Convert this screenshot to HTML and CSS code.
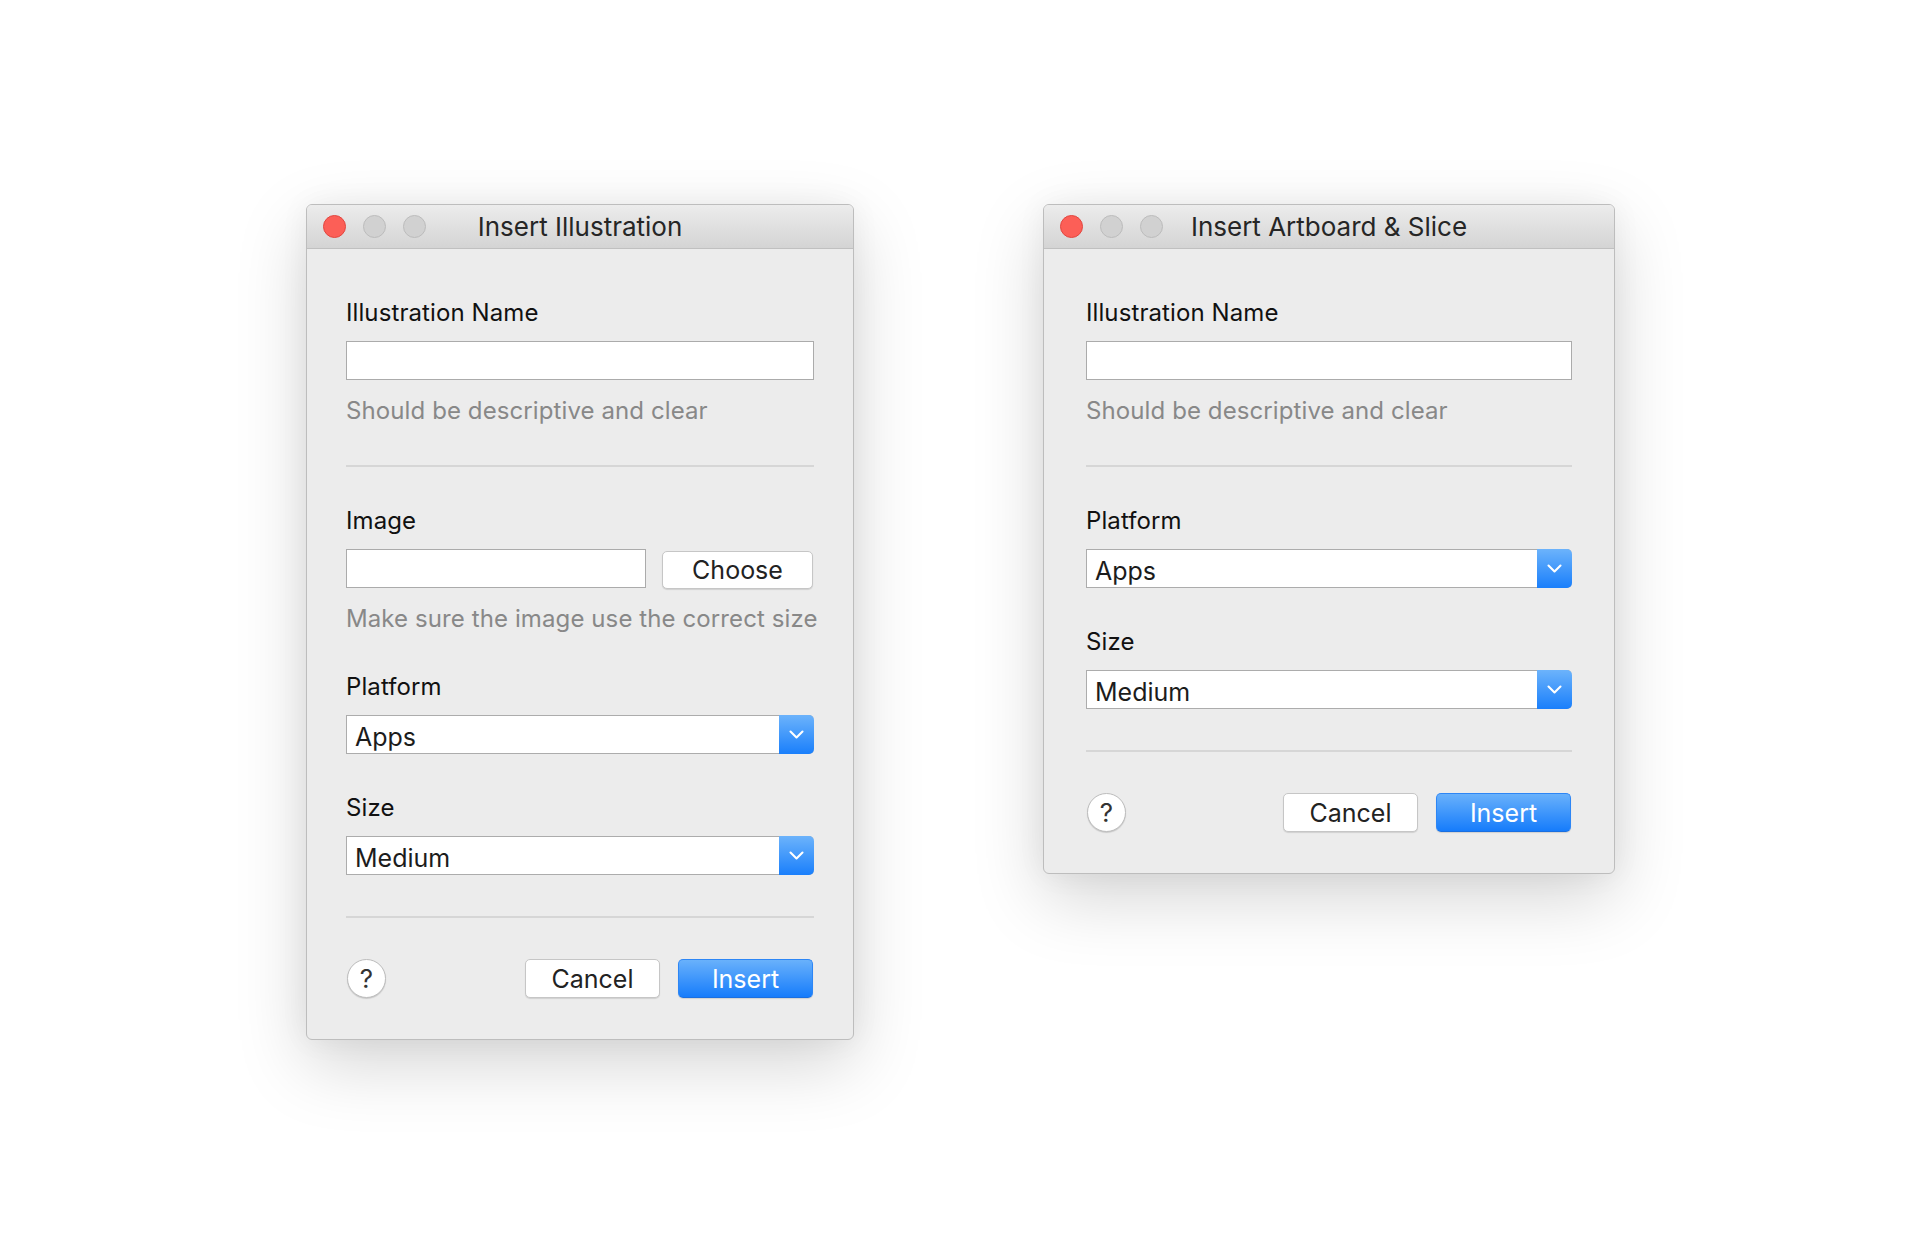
FILE: index.html
```html
<!DOCTYPE html>
<html lang="en">
<head>
<meta charset="utf-8">
<title>Insert dialogs</title>
<link rel="stylesheet" href="styles.css">
</head>
<body>
<main class="stage">
  <section class="window window--illustration">
    <header class="titlebar">
      <div class="lights"><span class="light light--close"></span><span class="light"></span><span class="light"></span></div>
      <h1 class="title">Insert Illustration</h1>
      <div></div>
    </header>
    <div class="content">
      <div class="field">
        <label class="label">Illustration Name</label>
        <input class="input" type="text">
        <p class="hint">Should be descriptive and clear</p>
      </div>
      <hr class="divider">
      <div class="field">
        <label class="label">Image</label>
        <div class="file-row">
          <input class="input" type="text">
          <button class="btn btn--choose">Choose</button>
        </div>
        <p class="hint">Make sure the image use the correct size</p>
      </div>
      <div class="field">
        <label class="label">Platform</label>
        <div class="select"><span class="select-value">Apps</span><span class="select-arrow"><svg width="15" height="9" viewBox="0 0 15 9"><path d="M1.5 1.5 L7.5 7.5 L13.5 1.5" fill="none" stroke="#fff" stroke-width="2.1" stroke-linecap="round" stroke-linejoin="round"/></svg></span></div>
      </div>
      <div class="field">
        <label class="label">Size</label>
        <div class="select"><span class="select-value">Medium</span><span class="select-arrow"><svg width="15" height="9" viewBox="0 0 15 9"><path d="M1.5 1.5 L7.5 7.5 L13.5 1.5" fill="none" stroke="#fff" stroke-width="2.1" stroke-linecap="round" stroke-linejoin="round"/></svg></span></div>
      </div>
      <hr class="divider divider--footer">
      <div class="footer">
        <button class="help">?</button>
        <div class="actions">
          <button class="btn">Cancel</button>
          <button class="btn btn--primary">Insert</button>
        </div>
      </div>
    </div>
  </section>

  <section class="window window--artboard">
    <header class="titlebar">
      <div class="lights"><span class="light light--close"></span><span class="light"></span><span class="light"></span></div>
      <h1 class="title">Insert Artboard &amp; Slice</h1>
      <div></div>
    </header>
    <div class="content">
      <div class="field">
        <label class="label">Illustration Name</label>
        <input class="input" type="text">
        <p class="hint">Should be descriptive and clear</p>
      </div>
      <hr class="divider">
      <div class="field">
        <label class="label">Platform</label>
        <div class="select"><span class="select-value">Apps</span><span class="select-arrow"><svg width="15" height="9" viewBox="0 0 15 9"><path d="M1.5 1.5 L7.5 7.5 L13.5 1.5" fill="none" stroke="#fff" stroke-width="2.1" stroke-linecap="round" stroke-linejoin="round"/></svg></span></div>
      </div>
      <div class="field">
        <label class="label">Size</label>
        <div class="select"><span class="select-value">Medium</span><span class="select-arrow"><svg width="15" height="9" viewBox="0 0 15 9"><path d="M1.5 1.5 L7.5 7.5 L13.5 1.5" fill="none" stroke="#fff" stroke-width="2.1" stroke-linecap="round" stroke-linejoin="round"/></svg></span></div>
      </div>
      <hr class="divider divider--footer">
      <div class="footer">
        <button class="help">?</button>
        <div class="actions">
          <button class="btn">Cancel</button>
          <button class="btn btn--primary">Insert</button>
        </div>
      </div>
    </div>
  </section>
</main>
</body>
</html>
```

FILE: styles.css
```css
* { box-sizing: border-box; }

html, body {
  margin: 0;
  background: #ffffff;
}

body {
  font-family: "Inter", "Liberation Sans", sans-serif;
  color: #111;
}

.stage {
  display: flex;
  align-items: flex-start;
  gap: 189px;
  padding: 204px 0 0 306px;
  min-height: 1240px;
}

.window {
  background: #ececec;
  border: 1px solid #bdbdbd;
  border-radius: 6px;
  overflow: hidden;
  box-shadow: 0 24px 70px rgba(0, 0, 0, 0.17), 0 0 30px rgba(0, 0, 0, 0.05);
}

.window--illustration { width: 548px; }
.window--artboard { width: 572px; }

.titlebar {
  height: 44px;
  display: grid;
  grid-template-columns: 1fr auto 1fr;
  align-items: center;
  background: linear-gradient(#ececec, #d4d4d4);
  border-bottom: 1px solid #c0c0c0;
}

.lights {
  display: flex;
  gap: 17px;
  padding-left: 16px;
}

.light {
  width: 23px;
  height: 23px;
  border-radius: 50%;
  background: #d1d1d1;
  border: 1px solid #bcbcbc;
}

.light--close {
  background: #fc5f57;
  border-color: #e2463f;
}

.title {
  margin: 0;
  font-size: 26px;
  font-weight: 400;
  color: #262626;
  line-height: 30px;
  white-space: nowrap;
}

.content {
  display: flex;
  flex-direction: column;
  gap: 40px;
  padding: 50px 39px 41px 39px;
}

.window--artboard .content {
  padding-left: 42px;
  padding-right: 42px;
}

.field {
  display: flex;
  flex-direction: column;
}

.label {
  font-size: 24px;
  letter-spacing: 0.1px;
  line-height: 28px;
  color: #111;
  margin-bottom: 14px;
}

.input {
  display: block;
  width: 100%;
  height: 39px;
  margin: 0;
  background: #fff;
  border: 1px solid #ababab;
  border-radius: 0;
  font: inherit;
  outline: none;
}

.hint {
  margin: 17px 0 0;
  font-size: 24px;
  letter-spacing: 0.1px;
  line-height: 28px;
  color: #888888;
  white-space: nowrap;
}

.divider {
  margin: 0;
  height: 2px;
  border: 0;
  background: #d6d6d6;
}

.divider--footer {
  margin-top: 1px;
}

.file-row {
  display: flex;
  gap: 16px;
  align-items: flex-start;
  height: 39px;
}

.file-row .input {
  flex: 1;
  width: auto;
}

.btn {
  height: 39px;
  width: 135px;
  padding: 0;
  font-family: "Inter", "Liberation Sans", sans-serif;
  font-size: 25px;
  color: #222;
  background: #fff;
  border: 1px solid #c6c6c6;
  border-radius: 5px;
  box-shadow: 0 1px 1px rgba(0, 0, 0, 0.12);
}

.btn--choose {
  width: 151px;
  height: 38px;
  margin-right: 1px;
  margin-top: 2px;
  flex-shrink: 0;
}

.btn--primary {
  color: #fff;
  background: linear-gradient(#69b1fb, #167cfb);
  border-color: #2d86f5;
  border-bottom-color: #1a6fe0;
}

.select {
  display: flex;
  height: 39px;
  background: #fff;
  border: 1px solid #acacac;
  border-right: 0;
  border-radius: 0 5px 5px 0;
}

.select-value {
  flex: 1;
  padding: 5px 0 0 8px;
  font-size: 25px;
  line-height: 32px;
  color: #1c1c1c;
}

.select-arrow {
  width: 35px;
  margin: -1px 0;
  display: flex;
  align-items: center;
  justify-content: center;
  background: linear-gradient(#6cb3fb, #1a7ffb);
  border-radius: 0 5px 5px 0;
}

.footer {
  display: flex;
  align-items: center;
  justify-content: space-between;
  margin-top: 1px;
}

.help {
  width: 39px;
  height: 39px;
  margin-left: 1px;
  padding: 0;
  border-radius: 50%;
  background: #fff;
  border: 1px solid #bdbdbd;
  box-shadow: 0 1px 1px rgba(0, 0, 0, 0.15);
  font-family: "Inter", "Liberation Sans", sans-serif;
  font-size: 26px;
  color: #333;
  line-height: 37px;
}

.actions {
  display: flex;
  gap: 18px;
  margin-right: 1px;
}
```
